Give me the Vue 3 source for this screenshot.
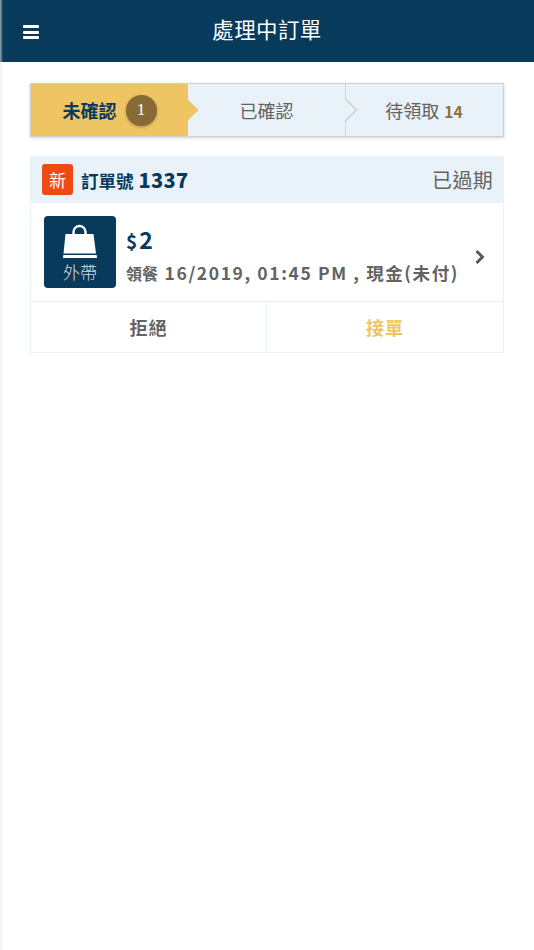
<script setup>
const tabs = [
  { label: '未確認', badge: '1', active: true },
  { label: '已確認' },
  { label: '待領取', count: '14' },
]
</script>

<template>
  <div class="page">
    <header class="topbar">
      <button class="menu" aria-label="menu">
        <span></span><span></span><span></span>
      </button>
      <h1>處理中訂單</h1>
    </header>

    <main class="content">
      <nav class="steps">
        <div
          v-for="(t, i) in tabs"
          :key="t.label"
          class="step"
          :class="{ active: t.active }"
        >
          <span class="label">{{ t.label }}</span>
          <span v-if="t.badge" class="badge">{{ t.badge }}</span>
          <span v-if="t.count" class="count">{{ t.count }}</span>
          <svg v-if="i < 2" class="arrow" width="13" height="54" viewBox="0 0 13 54">
            <path
              d="M0 0V15.500L11.500 27L0 38.500V54"
              :fill="t.active ? '#efc463' : '#e9f2f8'"
              :stroke="t.active ? '#e9f2f8' : '#cfcfcf'"
              stroke-width="1.500"
            />
          </svg>
        </div>
      </nav>

      <article class="card">
        <div class="card-head">
          <span class="new">新</span>
          <span class="order-no">訂單號 <b>1337</b></span>
          <span class="status">已過期</span>
        </div>
        <div class="card-body">
          <div class="type">
            <svg class="bag" width="36" height="36" viewBox="0 0 36 36">
              <path d="M11.500 13V8a6 6 0 0 1 12 0V13" fill="none" stroke="#fff" stroke-width="2.400" />
              <path d="M3.500 10H31.500L34 29.500H1.500Z" fill="#fff" />
              <path d="M1.300 31H34.700L35 34H1Z" fill="#fff" />
            </svg>
            <span class="type-label">外帶</span>
          </div>
          <div class="info">
            <div class="price"><small>$</small>2</div>
            <div class="meta"><small>領餐</small> 16/2019, 01:45 PM , 現金(未付)</div>
          </div>
          <svg class="chev" width="12" height="16" viewBox="0 0 12 16">
            <path d="M2.500 2l6 6-6 6" fill="none" stroke="#555" stroke-width="2.800" />
          </svg>
        </div>
        <div class="actions">
          <button class="reject">拒絕</button>
          <button class="accept">接單</button>
        </div>
      </article>
    </main>
  </div>
</template>

<style>
html, body { margin: 0; background: #fff; }
</style>

<style scoped>
.page {
  width: 534px;
  height: 950px;
  overflow: hidden;
  background: #fff;
  box-sizing: border-box;
  font-family: "Noto Sans CJK TC", "Noto Sans", sans-serif;
  position: relative;
}
.page::before {
  content: "";
  position: absolute;
  left: 0;
  top: 0;
  bottom: 0;
  width: 3px;
  background: linear-gradient(to right, rgba(0,0,0,.05), rgba(0,0,0,0));
  z-index: 2;
}
.topbar {
  height: 62px;
  background: #083a5b;
  display: flex;
  align-items: center;
  justify-content: center;
  position: relative;
}
.topbar::before {
  content: "";
  position: absolute;
  left: 0;
  top: 0;
  bottom: 0;
  width: 3px;
  background: linear-gradient(to right, rgba(255,255,255,.6), rgba(255,255,255,0));
}
.topbar h1 {
  margin: 0 0 5px;
  color: #fff;
  font-size: 21.500px;
  font-weight: 400;
  letter-spacing: 0.4px;
  line-height: 30px;
}
.menu {
  position: absolute;
  left: 23px;
  top: 25px;
  width: 16px;
  height: 14px;
  padding: 0;
  border: 0;
  background: none;
  display: flex;
  flex-direction: column;
  justify-content: space-between;
}
.menu span { display: block; height: 3px; background: #fff; border-radius: 1px; }
.content { padding: 21px 30px 0; }
.steps {
  display: grid;
  grid-template-columns: 157px 157px 1fr;
  height: 54px;
  box-sizing: border-box;
  border: 1px solid #cfcfcf;
  box-shadow: 0 1px 3px rgba(0,0,0,.18);
  background: #e9f2f8;
}
.step {
  position: relative;
  display: flex;
  align-items: center;
  justify-content: center;
  color: #636363;
  font-size: 18px;
  line-height: 24px;
}
.step.active { background: #efc463; color: #083a5b; font-weight: 700; }
.badge {
  margin-left: 9px;
  width: 31px;
  height: 31px;
  border-radius: 50%;
  background: #876a36;
  color: #fff;
  font-family: "Liberation Serif", serif;
  font-weight: 400;
  font-size: 17px;
  display: flex;
  align-items: center;
  justify-content: center;
  box-shadow: 0 1px 3px rgba(0,0,0,.3);
}
.count { margin-left: 5px; margin-top: 1px; color: #8f6f36; font-size: 15.500px; font-weight: 700; }
.arrow {
  position: absolute;
  left: 100%;
  top: -1px;
  z-index: 1;
}
.card {
  margin-top: 19px;
  border: 1px solid #e9f2f8;
  box-sizing: border-box;
  height: 197px;
  display: flex;
  flex-direction: column;
}
.card-head {
  height: 47px;
  flex: none;
  margin: -1px -1px 0;
  background: #e9f2f8;
  display: flex;
  align-items: center;
  padding: 0 11px 0 12px;
}
.new {
  width: 31px;
  height: 31px;
  background: #ee4b14;
  border-radius: 3px;
  color: #fff;
  font-size: 17px;
  display: flex;
  align-items: center;
  justify-content: center;
}
.order-no { margin-left: 8px; color: #083a5b; font-size: 17.500px; font-weight: 700; }
.order-no b { font-size: 20px; letter-spacing: 0.3px; margin-left: 1px; }
.status { margin-left: auto; color: #636363; font-size: 20px; letter-spacing: 0.3px; }
.card-body {
  height: 98px;
  flex: none;
  display: flex;
  align-items: center;
  padding: 0 0 0 13px;
  border-bottom: 1px solid #e9f2f8;
  position: relative;
}
.type {
  width: 72px;
  height: 72px;
  background: #083a5b;
  border-radius: 4px;
  display: flex;
  flex-direction: column;
  align-items: center;
  color: #d4dde3;
}
.bag { margin-top: 8px; }
.type-label { font-size: 17px; line-height: 22px; font-weight: 300; margin-top: 1px; }
.info { margin-left: 10px; padding-top: 4px; }
.price { color: #083a5b; font-size: 23px; font-weight: 700; line-height: 30px; }
.price small { font-size: 19px; margin-right: 2px; }
.meta { color: #636363; font-size: 17.500px; font-weight: 700; letter-spacing: 1.600px; line-height: 24px; margin-top: 5px; white-space: nowrap; }
.meta small { font-size: 16px; letter-spacing: 0; margin-right: 1px; }
.chev { position: absolute; right: 17px; top: 46px; }
.actions { flex: 1; display: grid; grid-template-columns: 236px 1fr; }
.actions button {
  border: 0;
  background: #fff;
  font: inherit;
  font-size: 18px;
  font-weight: 700;
  letter-spacing: 1px;
  padding: 0;
}
.reject { color: #636363; border-right: 1px solid #e9f2f8 !important; }
.accept { color: #efc463; }
</style>
